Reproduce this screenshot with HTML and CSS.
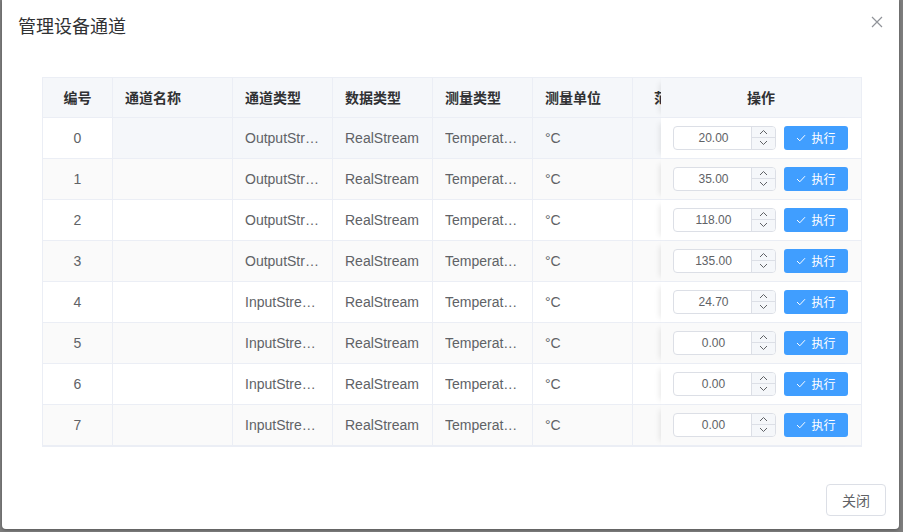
FILE: index.html
```html
<!DOCTYPE html>
<html lang="zh-CN">

<head>
  <meta charset="UTF-8">
  <title>管理设备通道</title>
  <link rel="stylesheet" href="styles.css">
</head>

<body>
  <div class="dialog">
    <div class="dialog-header">
      <span class="dialog-title">管理设备通道</span>
      <svg class="dialog-close" width="12" height="12" viewBox="0 0 12 12">
        <path d="M1 1L11 11M11 1L1 11" stroke="#909399" stroke-width="1.2" fill="none" />
      </svg>
    </div>

    <div class="dialog-body">
      <div class="table">
        <div class="row head">
          <div class="cell center">编号</div>
          <div class="cell">通道名称</div>
          <div class="cell">通道类型</div>
          <div class="cell">数据类型</div>
          <div class="cell">测量类型</div>
          <div class="cell">测量单位</div>
          <div class="cell clipped">范围</div>
          <div class="cell fixed center">操作</div>
        </div>
        <div id="rows"></div>
      </div>
    </div>

    <div class="dialog-footer">
      <button class="btn-plain">关闭</button>
    </div>
  </div>

  <script>
    const channels = [
      { id: 0, type: 'OutputStream', value: '20.00' },
      { id: 1, type: 'OutputStream', value: '35.00' },
      { id: 2, type: 'OutputStream', value: '118.00' },
      { id: 3, type: 'OutputStream', value: '135.00' },
      { id: 4, type: 'InputStream', value: '24.70' },
      { id: 5, type: 'InputStream', value: '0.00' },
      { id: 6, type: 'InputStream', value: '0.00' },
      { id: 7, type: 'InputStream', value: '0.00' }
    ];

    const rowsBox = document.getElementById('rows');

    channels.forEach((ch, i) => {
      const row = document.createElement('div');
      row.className = 'row';
      if (i % 2 === 1) row.classList.add('striped');
      if (i === 0) row.classList.add('hover');
      row.innerHTML = `
        <div class="cell center first">${ch.id}</div>
        <div class="cell"></div>
        <div class="cell"><span class="ellipsis">${ch.type}</span></div>
        <div class="cell"><span class="ellipsis">RealStream</span></div>
        <div class="cell"><span class="ellipsis">Temperature</span></div>
        <div class="cell">°C</div>
        <div class="cell clipped"></div>
        <div class="cell fixed center">
          <div class="actions">
            <div class="input-number">
              <span class="input-value">${ch.value}</span>
              <span class="controls">
                <span class="ctrl"><svg width="9" height="6" viewBox="0 0 9 6"><path d="M1 5L4.5 1.5L8 5" stroke="#606266" fill="none"/></svg></span>
                <span class="ctrl"><svg width="9" height="6" viewBox="0 0 9 6"><path d="M1 1L4.5 4.5L8 1" stroke="#606266" fill="none"/></svg></span>
              </span>
            </div>
            <button class="btn-primary">
              <svg width="10" height="8" viewBox="0 0 10 8"><path d="M1 4L3.8 6.8L9 1.2" stroke="#fff" stroke-width="1" fill="none"/></svg>
              执行
            </button>
          </div>
        </div>`;
      rowsBox.appendChild(row);
    });
  </script>
</body>

</html>
```

FILE: styles.css
```css
body {
  margin: 0;
  padding-left: 2px;
  height: 532px;
  overflow: hidden;
  background-color: #7d7d7d;
  font-family: "Liberation Sans", "Noto Sans CJK SC", sans-serif;
}

.dialog {
  position: relative;
  width: 897px;
  height: 529px;
  background-color: #fff;
  border-radius: 0 0 4px 4px;
  box-shadow: 0 1px 3px rgba(0, 0, 0, 0.3);
  display: flex;
  flex-direction: column;
}

.dialog-header {
  padding: 15px 16px 0;
}

.dialog-title {
  font-size: 18px;
  line-height: 24px;
  color: #303133;
}

.dialog-close {
  position: absolute;
  top: 16px;
  right: 16px;
}

.dialog-body {
  padding: 38px 0 0 40px;
}

.table {
  width: 818px;
  border: 1px solid #ebeef5;
  font-size: 14px;
  color: #606266;
}

.row {
  display: grid;
  grid-template-columns: 70px 120px 100px 100px 100px 100px 28px 200px;
  height: 41px;
  background-color: #fff;
}

.row.head {
  height: 40px;
  background-color: #f5f7fa;
  color: #303133;
  font-weight: bold;
}

.row.striped {
  background-color: #fafafa;
}

.row.hover {
  background-color: #f5f7fa;
}

.row.hover .first,
.row.hover .fixed {
  background-color: #fff;
}

.cell {
  box-sizing: border-box;
  border-right: 1px solid #ebeef5;
  border-bottom: 1px solid #ebeef5;
  padding: 0 12px 1px;
  display: flex;
  align-items: center;
  overflow: hidden;
  white-space: nowrap;
}

.cell.center {
  justify-content: center;
  padding: 0 0 1px;
}

.cell.clipped {
  border-right: none;
  padding: 0 0 1px 21px;
}

.cell.fixed {
  border-right: none;
  background-color: inherit;
  box-shadow: -6px 0 6px -5px rgba(0, 0, 0, 0.1);
}

.row.head .cell.fixed {
  background-color: #f5f7fa;
}

.ellipsis {
  display: block;
  overflow: hidden;
  text-overflow: ellipsis;
}

.actions {
  display: flex;
  align-items: center;
  gap: 8px;
  padding-right: 1px;
}

.input-number {
  box-sizing: border-box;
  width: 103px;
  height: 24px;
  border: 1px solid #dcdfe6;
  border-radius: 4px;
  background-color: #fff;
  display: flex;
  font-size: 12px;
  color: #606266;
}

.input-value {
  flex: 1;
  display: flex;
  align-items: center;
  justify-content: center;
  padding-left: 2px;
}

.controls {
  width: 23px;
  display: flex;
  flex-direction: column;
  border-left: 1px solid #dcdfe6;
  background-color: #f5f7fa;
  border-radius: 0 3px 3px 0;
}

.ctrl {
  flex: 1;
  display: flex;
  align-items: center;
  justify-content: center;
}

.ctrl + .ctrl {
  border-top: 1px solid #dcdfe6;
}

.btn-primary {
  width: 64px;
  height: 24px;
  border: none;
  border-radius: 3px;
  background-color: #409eff;
  color: #fff;
  font-family: inherit;
  font-size: 12px;
  display: flex;
  align-items: center;
  justify-content: center;
  gap: 5px;
  padding: 0;
}

.dialog-footer {
  margin-top: auto;
  padding: 0 13px 13px;
  display: flex;
  justify-content: flex-end;
}

.btn-plain {
  width: 60px;
  height: 32px;
  border: 1px solid #dcdfe6;
  border-radius: 4px;
  background-color: #fff;
  color: #606266;
  font-family: inherit;
  font-size: 14px;
  padding: 0;
}
```
